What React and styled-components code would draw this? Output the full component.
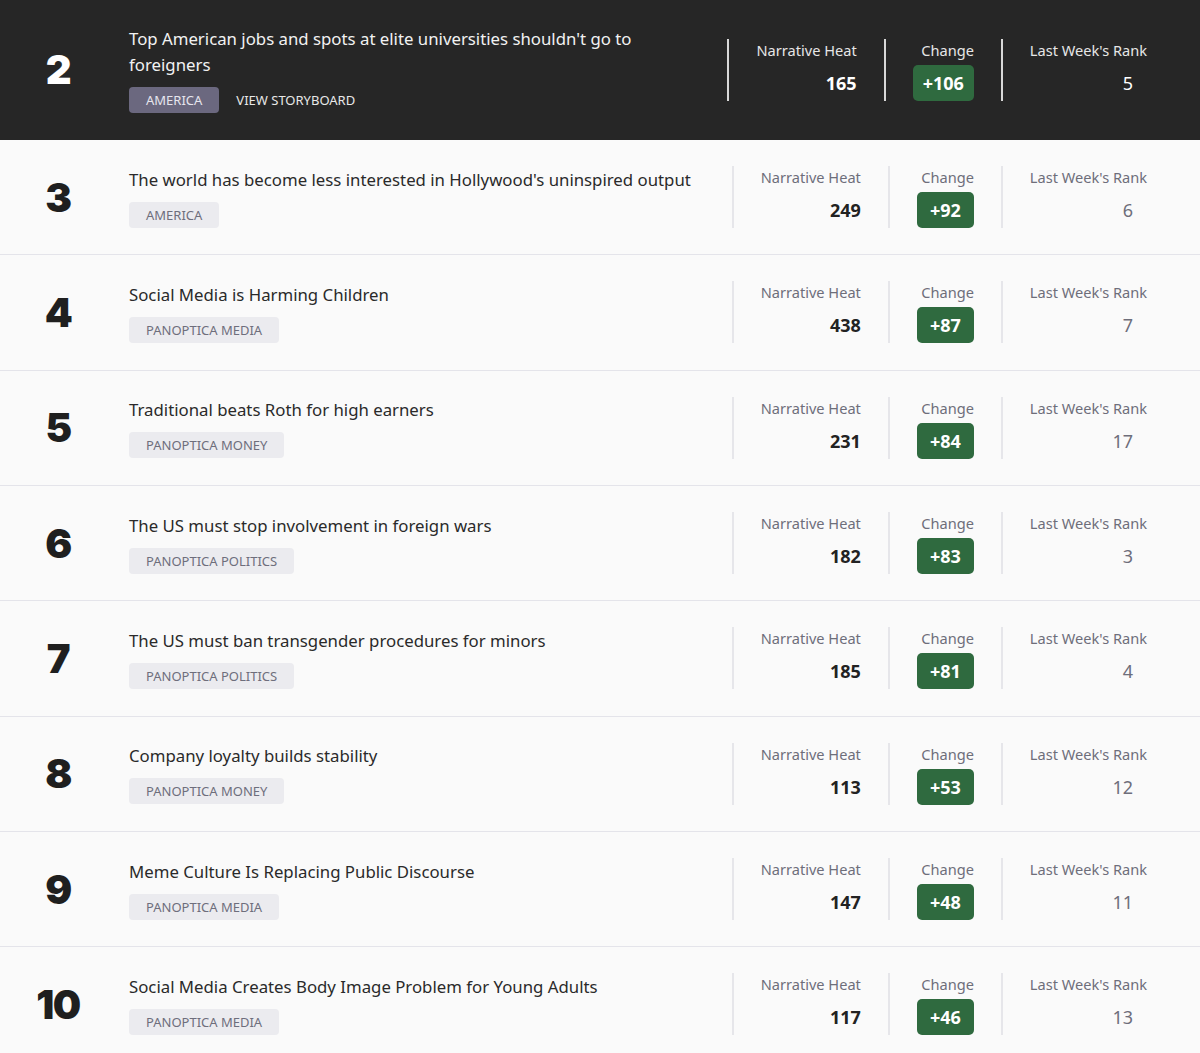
import styled, { createGlobalStyle } from 'styled-components'

const GlobalStyle = createGlobalStyle`
  body {
    margin: 0;
    background: #fafafa;
    font-family: "Noto Sans", "Liberation Sans", sans-serif;
  }
`;

const List = styled.div`
  width: 1200px;
  display: flex;
  flex-direction: column;
`;

const Row = styled.div`
  display: flex;
  align-items: center;
  box-sizing: border-box;
  height: ${p => (p.$active ? '140px' : '115.33px')};
  padding-right: 26px;
  background: ${p => (p.$active ? '#262626' : '#fafafa')};
  border-bottom: 1px solid ${p => (p.$active ? '#262626' : '#e4e4ea')};
`;

const Rank = styled.div`
  width: 116px;
  flex-shrink: 0;
  text-align: center;
  font-family: "Inter", "DejaVu Sans", sans-serif;
  font-weight: 900;
  font-size: 40px;
  letter-spacing: -1.5px;
  color: ${p => (p.$active ? '#ffffff' : '#1f1f1f')};
`;

const Body = styled.div`
  flex: 1;
  min-width: 0;
  padding-left: 13px;
  padding-right: 36px;
  display: flex;
  flex-direction: column;
  gap: 9px;
`;

const Title = styled.div`
  font-size: 16.8px;
  line-height: 26px;
  color: ${p => (p.$active ? '#f2f2f2' : '#2a2a2a')};
`;

const Tags = styled.div`
  display: flex;
  align-items: center;
  gap: 17px;
`;

const Tag = styled.span`
  height: 26px;
  display: inline-flex;
  align-items: center;
  padding: 0 17px;
  border-radius: 4px;
  font-size: 13px;
  text-transform: uppercase;
  background: ${p => (p.$active ? '#6b687f' : '#ebebef')};
  color: ${p => (p.$active ? '#e6e5ee' : '#6e6e7c')};
`;

const Link = styled.span`
  font-size: 13px;
  color: #e8e8e8;
  text-transform: uppercase;
`;

const Stats = styled.div`
  display: flex;
  flex-shrink: 0;
  height: 62px;
`;

const Stat = styled.div`
  display: flex;
  flex-direction: column;
  align-items: flex-end;
  justify-content: space-between;
  padding: 0 27px;
  border-left: 2px solid ${p => (p.$active ? '#d8d8d8' : '#e6e6ea')};
`;

const Label = styled.div`
  font-size: 14.6px;
  line-height: 22px;
  color: ${p => (p.$active ? '#e6e6e6' : '#6e6e7a')};
  white-space: nowrap;
`;

const Value = styled.div`
  font-size: 18px;
  line-height: 36px;
  font-weight: ${p => (p.$plain ? 400 : 700)};
  color: ${p => (p.$active ? '#ffffff' : p.$plain ? '#6e6e7a' : '#222222')};
  padding-right: ${p => (p.$plain ? '14px' : '0')};
`;

const Badge = styled.div`
  height: 36px;
  min-width: 57px;
  box-sizing: border-box;
  padding: 0 10px;
  display: flex;
  align-items: center;
  justify-content: center;
  border-radius: 5px;
  background: #2f6a3f;
  color: #ffffff;
  font-size: 18px;
  font-weight: 700;
`;

const items = [
  { rank: 2, title: "Top American jobs and spots at elite universities shouldn't go to foreigners", tag: 'America', heat: 165, change: 106, last: 5 },
  { rank: 3, title: "The world has become less interested in Hollywood's uninspired output", tag: 'America', heat: 249, change: 92, last: 6 },
  { rank: 4, title: 'Social Media is Harming Children', tag: 'Panoptica Media', heat: 438, change: 87, last: 7 },
  { rank: 5, title: 'Traditional beats Roth for high earners', tag: 'Panoptica Money', heat: 231, change: 84, last: 17 },
  { rank: 6, title: 'The US must stop involvement in foreign wars', tag: 'Panoptica Politics', heat: 182, change: 83, last: 3 },
  { rank: 7, title: 'The US must ban transgender procedures for minors', tag: 'Panoptica Politics', heat: 185, change: 81, last: 4 },
  { rank: 8, title: 'Company loyalty builds stability', tag: 'Panoptica Money', heat: 113, change: 53, last: 12 },
  { rank: 9, title: 'Meme Culture Is Replacing Public Discourse', tag: 'Panoptica Media', heat: 147, change: 48, last: 11 },
  { rank: 10, title: 'Social Media Creates Body Image Problem for Young Adults', tag: 'Panoptica Media', heat: 117, change: 46, last: 13 },
];

const App = () => {
  return (
    <>
      <GlobalStyle />
      <List>
        {items.map((it, i) => {
          const active = i === 0;
          return (
            <Row key={it.rank} $active={active}>
              <Rank $active={active}>{it.rank}</Rank>
              <Body>
                <Title $active={active}>{it.title}</Title>
                <Tags>
                  <Tag $active={active}>{it.tag}</Tag>
                  {active && <Link>View Storyboard</Link>}
                </Tags>
              </Body>
              <Stats>
                <Stat $active={active}>
                  <Label $active={active}>Narrative Heat</Label>
                  <Value $active={active}>{it.heat}</Value>
                </Stat>
                <Stat $active={active}>
                  <Label $active={active}>Change</Label>
                  <Badge>+{it.change}</Badge>
                </Stat>
                <Stat $active={active}>
                  <Label $active={active}>Last Week's Rank</Label>
                  <Value $active={active} $plain>{it.last}</Value>
                </Stat>
              </Stats>
            </Row>
          );
        })}
      </List>
    </>
  )
}

export default App
